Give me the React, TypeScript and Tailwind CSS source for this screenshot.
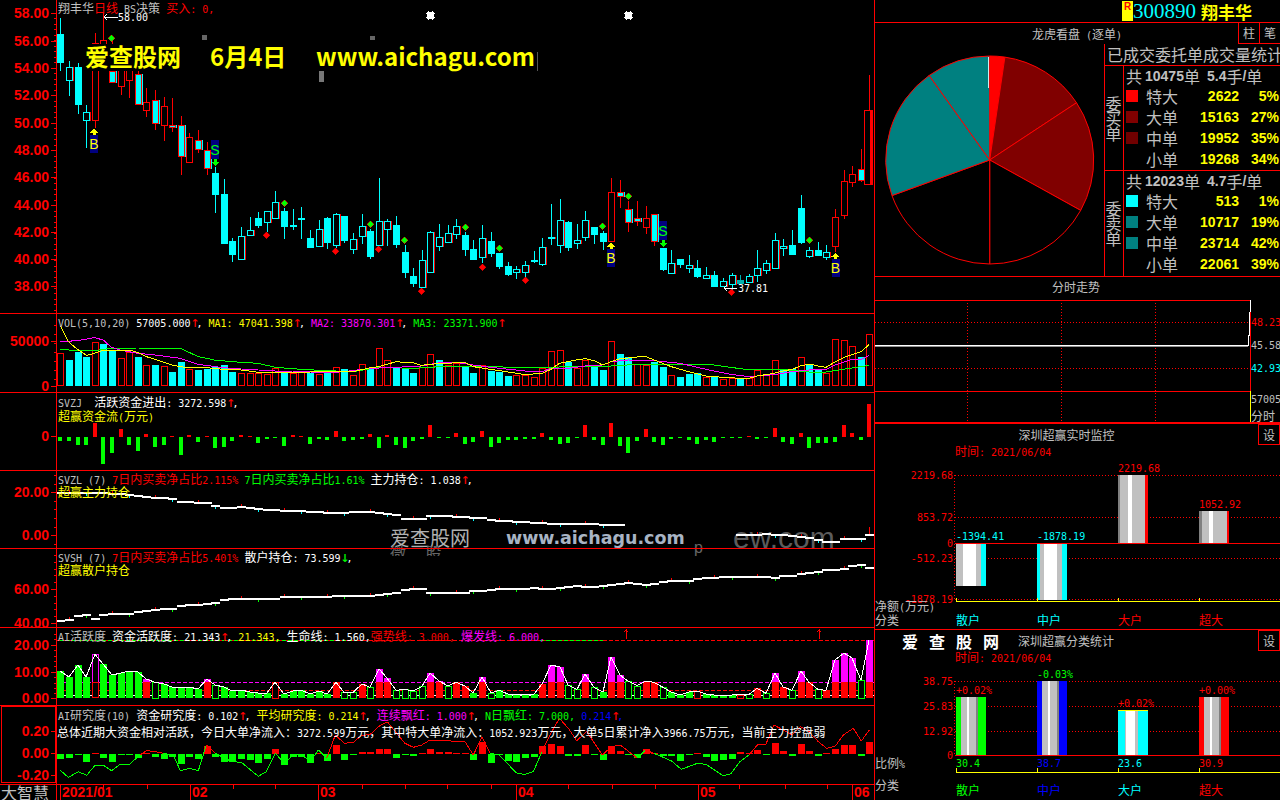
import type { ReactNode } from 'react';

const RED = '#ff0000';
const GREEN = '#00ff00';
const CYAN = '#00ffff';
const MAGENTA = '#ff00ff';
const YELLOW = '#ffff00';
const GREY = '#c0c0c0';
const WHITE = '#ffffff';
const BLUE = '#0000ff';

const xAt = (i: number) => Math.round(60.3 + 8.607 * i);
const MONO = 'DejaVu Sans Mono';
const CJK = 'Noto Sans CJK SC';

// numbers below are read off the 3x crops, so most of them get divided by 3
const candles: [number, number, number, number, string][] = [
  [102, 188, 54, 212, 'c'], [202, 242, 183, 288, 'h'], [202, 315, 190, 342, 'c'], [337, 362, 316, 445, 'h'],
  [130, 362, 100, 385, 'r'], [120, 210, 40, 213, 'r'], [213, 250, 115, 250, 'm'], [200, 262, 200, 285, 'r'],
  [200, 242, 200, 294, 'r'], [223, 314, 213, 314, 'm'], [307, 332, 265, 350, 'r'], [301, 373, 270, 390, 'm'],
  [319, 377, 292, 423, 'r'], [376, 383, 294, 395, 'm'], [376, 472, 349, 525, 'm'], [412, 490, 400, 490, 'r'],
  [421, 451, 390, 458, 'm'], [451, 508, 427, 524, 'm'], [520, 585, 500, 639, 'c'], [583, 731, 537, 731, 'c'],
  [724, 764, 714, 785, 'c'], [709, 781, 682, 781, 'h'], [691, 709, 652, 709, 'h'], [655, 677, 636, 683, 'c'],
  [634, 670, 634, 696, 'h'], [607, 656, 574, 656, 'h'], [633, 680, 625, 716, 'c'], [676, 680, 628, 690, 'c'],
  [655, 659, 622, 716, 'c'], [714, 743, 690, 743, 'c'], [688, 740, 660, 740, 'h'], [655, 728, 652, 747, 'c'],
  [643, 737, 640, 745, 'h'], [649, 722, 649, 730, 'c'], [718, 751, 700, 762, 'h'], [677, 712, 643, 733, 'h'],
  [694, 770, 688, 777, 'c'], [664, 737, 535, 737, 'h'], [664, 689, 658, 737, 'h'], [676, 734, 649, 743, 'c'],
  [757, 818, 735, 833, 'c'], [829, 851, 805, 860, 'c'], [781, 863, 750, 863, 'h'], [697, 818, 692, 818, 'h'],
  [712, 740, 672, 752, 'h'], [700, 728, 675, 728, 'h'], [679, 706, 657, 716, 'h'], [705, 750, 697, 768, 'c'],
  [748, 780, 720, 780, 'c'], [715, 773, 675, 790, 'h'], [723, 762, 697, 770, 'c'], [760, 801, 760, 806, 'c'],
  [798, 825, 786, 827, 'c'], [808, 818, 798, 837, 'h'], [796, 818, 784, 832, 'h'], [781, 785, 753, 790, 'c'],
  [742, 795, 714, 798, 'h'], [712, 718, 612, 735, 'h'], [661, 737, 598, 758, 'h'], [666, 743, 663, 753, 'c'],
  [721, 731, 672, 747, 'h'], [661, 713, 633, 722, 'h'], [681, 705, 681, 732, 'c'], [699, 725, 693, 750, 'c'],
  [577, 725, 534, 725, 'r'], [577, 592, 540, 624, 'm'], [628, 670, 603, 695, 'm'], [655, 667, 603, 678, 'm'],
  [655, 683, 618, 702, 'r'], [643, 727, 643, 738, 'm'], [744, 809, 744, 813, 'c'], [790, 821, 750, 821, 'h'],
  [777, 795, 777, 804, 'c'], [796, 806, 766, 819, 'h'], [804, 831, 780, 834, 'c'], [826, 836, 801, 836, 'h'],
  [825, 861, 813, 861, 'c'], [844, 862, 835, 862, 'h'], [826, 854, 819, 870, 'h'], [840, 851, 825, 851, 't'],
  [829, 850, 822, 850, 'h'], [805, 827, 750, 846, 'h'], [790, 812, 780, 822, 'h'], [721, 806, 700, 806, 'h'],
  [739, 746, 717, 768, 'h'], [735, 765, 690, 765, 'c'], [625, 729, 586, 732, 'c'], [751, 771, 740, 775, 'h'],
  [750, 768, 726, 768, 'c'], [757, 774, 736, 780, 'h'], [652, 740, 628, 755, 'r'], [544, 647, 511, 657, 'r'],
  [523, 548, 498, 561, 'r'], [508, 542, 447, 545, 'm'], [331, 556, 225, 331, 'R'],
];

const vols: [number, number][] = [
  [130, 0], [150, 1], [126, 1], [141, 1], [97, 0], [102, 1], [122, 1], [145, 0], [127, 0], [141, 1], [166, 0], [165, 1],
  [169, 0], [186, 1], [156, 1], [178, 0], [180, 1], [176, 1], [170, 1], [165, 1], [186, 1], [190, 0], [190, 0], [190, 0],
  [193, 0], [175, 0], [183, 1], [190, 0], [183, 0], [188, 1], [193, 0], [190, 1], [172, 0], [178, 1], [196, 0], [163, 0],
  [178, 1], [115, 0], [151, 0], [172, 1], [178, 1], [189, 1], [170, 0], [133, 0], [150, 1], [165, 0], [158, 0], [167, 1],
  [189, 1], [166, 0], [183, 1], [185, 1], [198, 1], [196, 0], [196, 0], [200, 0], [175, 0], [124, 0], [121, 0], [157, 1],
  [175, 0], [150, 0], [168, 1], [180, 1], [94, 0], [132, 1], [141, 1], [163, 0], [165, 0], [155, 1], [171, 1], [196, 0],
  [201, 1], [192, 1], [190, 1], [201, 0], [200, 1], [208, 0], [203, 0], [205, 1], [205, 0], [181, 0], [196, 0], [151, 0],
  [178, 1], [178, 1], [142, 0], [165, 1], [180, 1], [190, 0], [88, 0], [91, 0], [109, 0], [140, 1], [73, 0],
];

const ma1 = [181, 48, 205, 95, 232, 118, 259, 136, 283, 130, 310, 120, 334, 120, 388, 120, 412, 127, 439, 140, 466, 148, 517, 165, 541, 170, 568, 173, 619, 173, 670, 178, 724, 180, 775, 187, 826, 187, 877, 187, 931, 186, 982, 185, 1033, 186, 1060, 185, 1111, 173, 1135, 170, 1189, 155, 1213, 157, 1240, 158, 1264, 166, 1320, 160, 1395, 158, 1420, 170, 1471, 178, 1525, 186, 1575, 194, 1626, 190, 1653, 178, 1678, 160, 1728, 150, 1755, 146, 1783, 152, 1807, 165, 1834, 155, 1858, 147, 1912, 141, 1936, 139, 1962, 150, 2014, 170, 2065, 185, 2118, 198, 2169, 202, 2221, 205, 2247, 205, 2272, 198, 2322, 190, 2349, 183, 2377, 178, 2401, 168, 2427, 162, 2455, 168, 2478, 172, 2506, 155, 2530, 143, 2584, 125, 2608, 103];
const ma2 = [181, 95, 232, 92, 283, 83, 310, 90, 334, 112, 361, 120, 412, 130, 466, 135, 541, 145, 595, 163, 670, 173, 724, 177, 775, 180, 826, 183, 877, 183, 931, 186, 982, 188, 1033, 185, 1111, 175, 1189, 172, 1264, 168, 1320, 158, 1368, 157, 1420, 165, 1471, 172, 1575, 183, 1626, 185, 1653, 175, 1705, 175, 1755, 168, 1807, 165, 1834, 155, 1885, 150, 1962, 152, 2041, 160, 2118, 178, 2193, 193, 2247, 200, 2322, 194, 2377, 185, 2427, 180, 2478, 178, 2506, 165, 2557, 148, 2584, 148, 2608, 136];
const ma3 = [181, 118, 232, 122, 283, 122, 334, 115, 412, 114, 541, 115, 595, 140, 643, 150, 695, 155, 775, 160, 826, 172, 904, 178, 982, 182, 1060, 185, 1135, 172, 1240, 175, 1320, 170, 1420, 168, 1540, 172, 1653, 172, 1755, 168, 1834, 168, 1912, 163, 2128, 163, 2235, 178, 2349, 178, 2427, 186, 2478, 186, 2530, 178, 2580, 170, 2608, 166];

const zj = [-12, -12, -24, -24, 43, -80, -48, 23, -24, -42, 9, -30, -24, 3, -54, 6, -15, 1, -33, -30, -12, 6, 3, -18, -6, -2, -27, 6, 3, -21, -6, -9, 18, -12, -9, -6, 8, -33, 6, -24, -33, -12, -6, 36, -3, -3, 12, -21, -15, 18, -30, -18, -9, -9, -6, -5, 11, -10, -20, -18, -2, 35, -10, -24, 41, -26, -48, -12, 23, -15, -24, -6, -2, -8, -21, -9, -14, -2, -2, -2, 3, -5, -4, 26, -15, -21, 11, -33, -18, -18, -15, 35, 11, -9, 98];

const zl1 = [170, 545, 360, 548, 410, 555, 520, 565, 545, 573, 620, 577, 650, 585, 670, 591, 730, 588, 780, 595, 850, 600, 900, 598, 930, 604, 1030, 605, 1100, 603, 1190, 611, 1215, 624, 1270, 624, 1290, 614, 1320, 615, 1370, 618, 1450, 622, 1480, 628, 1580, 634, 1670, 640, 1750, 638, 1865, 643];
const zl2 = [2200, 672, 2320, 670, 2420, 680, 2480, 692, 2510, 692, 2535, 684, 2585, 684, 2608, 670];
const sh = [180, 224, 205, 224, 230, 212, 260, 208, 285, 218, 310, 208, 340, 203, 385, 203, 410, 197, 465, 193, 525, 187, 545, 180, 595, 176, 645, 172, 675, 160, 700, 158, 825, 158, 860, 153, 950, 152, 1110, 150, 1165, 143, 1190, 142, 1220, 130, 1260, 127, 1290, 142, 1395, 142, 1420, 135, 1470, 134, 1500, 128, 1570, 128, 1590, 126, 1630, 130, 1680, 125, 1730, 120, 1760, 125, 1810, 120, 1860, 113, 1885, 111, 1935, 117, 1960, 115, 1990, 107, 2070, 105, 2095, 98, 2170, 94, 2300, 93, 2325, 97, 2350, 90, 2380, 90, 2430, 80, 2480, 73, 2530, 70, 2560, 60, 2585, 58, 2608, 65];

const ai: [number, string][] = [
  [378, 'g'], [396, 'g'], [360, 'g'], [396, 'g'], [328, 'p'], [357, 'g'], [390, 'g'], [384, 'g'], [378, 'g'], [381, 'g'], [402, 'r'], [412, 'h'],
  [417, 'g'], [426, 'g'], [426, 'g'], [426, 'g'], [432, 'g'], [402, 'r'], [420, 'h'], [426, 'g'], [438, 'g'], [435, 'g'], [441, 'g'], [444, 'g'],
  [444, 'g'], [412, 'o'], [447, 'g'], [438, 'g'], [435, 'g'], [447, 'g'], [438, 'g'], [447, 'g'], [412, 'r'], [442, 'h'], [442, 'h'], [417, 'r'],
  [427, 'h'], [372, 'r'], [399, 'r'], [436, 'h'], [433, 'h'], [438, 'h'], [424, 'h'], [384, 'r'], [408, 'r'], [423, 'h'], [412, 'r'], [423, 'r'],
  [444, 'g'], [396, 'r'], [444, 'h'], [436, 'g'], [447, 'g'], [450, 'g'], [447, 'g'], [447, 'g'], [417, 'r'], [360, 'r'], [366, 'r'], [420, 'h'],
  [433, 'h'], [387, 'r'], [427, 'h'], [441, 'g'], [336, 'r'], [390, 'r'], [408, 'h'], [422, 'h'], [408, 'r'], [412, 'r'], [427, 'h'], [441, 'g'],
  [450, 'g'], [441, 'g'], [438, 'o'], [447, 'g'], [450, 'g'], [453, 'g'], [450, 'g'], [449, 'o'], [448, 'h'], [430, 'r'], [445, 'h'], [384, 'r'],
  [426, 'r'], [436, 'h'], [378, 'r'], [412, 'r'], [433, 'h'], [436, 'r'], [345, 'r'], [324, 'r'], [339, 'r'], [406, 'h'], [285, 'r'],
];

const yj = [-15, -12, -3, -24, 3, -12, -24, -2, -3, -12, 3, -9, -15, -9, -30, -9, -15, 25, -9, -24, -24, -15, -18, -27, -15, 16, -33, -9, -9, -27, 3, -21, 26, -18, -3, 6, 6, 15, 15, -12, -3, -6, 3, 15, 6, 6, 3, 3, -18, 36, -27, -3, -20, -24, -12, -9, 24, 30, 24, -6, -6, 27, -3, -18, 24, 9, -3, -12, 15, 3, -6, -6, -21, -3, 3, -9, -21, -18, -15, 6, 3, 12, -3, 33, 9, -6, 30, 9, -6, 3, 15, 27, 27, -6, 36];
const yjLine = [180, 675, 205, 697, 235, 680, 260, 691, 285, 661, 310, 661, 335, 677, 360, 658, 388, 658, 420, 630, 440, 617, 466, 620, 490, 625, 520, 630, 541, 677, 568, 670, 595, 677, 619, 600, 646, 625, 695, 650, 724, 652, 775, 694, 799, 680, 826, 625, 853, 655, 880, 630, 904, 628, 931, 650, 955, 615, 980, 640, 1006, 570, 1033, 595, 1060, 592, 1084, 572, 1111, 568, 1135, 545, 1162, 530, 1190, 565, 1215, 595, 1240, 607, 1265, 600, 1290, 585, 1395, 590, 1420, 630, 1446, 575, 1471, 625, 1498, 630, 1550, 685, 1575, 688, 1600, 680, 1626, 620, 1650, 570, 1678, 520, 1705, 550, 1730, 587, 1760, 560, 1807, 630, 1834, 605, 1861, 600, 1912, 640, 1936, 615, 1962, 625, 2015, 648, 2044, 673, 2092, 655, 2118, 658, 2169, 692, 2193, 686, 2220, 650, 2247, 630, 2272, 600, 2298, 597, 2322, 540, 2349, 555, 2377, 570, 2401, 545, 2427, 560, 2455, 590, 2480, 610, 2506, 603, 2530, 570, 2560, 550, 2584, 588, 2608, 555];

const pts = (a: number[], oy: number) => {
  const out: string[] = [];
  for (let i = 0; i < a.length; i += 2) out.push(`${a[i] / 3},${oy + a[i + 1] / 3}`);
  return out.join(' ');
};

function interp(a: number[], zx: number) {
  if (zx < a[0] || zx > a[a.length - 2]) return null;
  for (let i = 0; i < a.length - 2; i += 2) {
    if (zx >= a[i] && zx <= a[i + 2]) {
      return a[i + 1] + ((a[i + 3] - a[i + 1]) * (zx - a[i])) / (a[i + 2] - a[i] || 1);
    }
  }
  return null;
}

// half-width latin next to full-width chinese, the way the old bitmap font does it
function runs(s: string) {
  return s.match(/↑|↓|[\x00-\x7f]+|[^\x00-\x7f↑↓]+/g) ?? [];
}

function T({ c, color }: { c: string; color: string }) {
  return (
    <span style={{ color }}>
      {runs(c).map((r, i) =>
        r === '↑' || r === '↓' ? (
          <span key={i} className="font-['DejaVu_Sans_Mono',monospace] text-[15px] leading-[10px] tracking-[-3px]">{r}</span>
        ) : /^[\x00-\x7f]/.test(r) ? (
          <span key={i} className="font-['DejaVu_Sans_Mono',monospace] text-[10px]">{r}</span>
        ) : (
          <span key={i} className="text-[12px]">{r}</span>
        ),
      )}
    </span>
  );
}

function Line({ items, className = '' }: { items: [string, string][]; className?: string }) {
  return (
    <div className={`whitespace-pre leading-[13px] h-[13px] ${className}`}>
      {items.map(([c, color], i) => (
        <T key={i} c={c} color={color} />
      ))}
    </div>
  );
}

function ST({ x, y, c, fill = GREY, anchor }: { x: number; y: number; c: string; fill?: string; anchor?: 'end' | 'middle' }) {
  return (
    <text x={x} y={y} fill={fill} textAnchor={anchor} xmlSpace="preserve">
      {runs(c).map((r, i) =>
        /^[\x00-\x7f]/.test(r) ? (
          <tspan key={i} fontFamily={MONO} fontSize={10}>{r}</tspan>
        ) : (
          <tspan key={i} fontFamily={CJK} fontSize={12}>{r}</tspan>
        ),
      )}
    </text>
  );
}

function AxisLabel({ x, y, c, anchor }: { x: number; y: number; c: string; anchor?: 'end' }) {
  return (
    <text x={x} y={y} fill={RED} fontFamily="Liberation Sans" fontWeight="bold" fontSize={14} textAnchor={anchor}>
      {c}
    </text>
  );
}

function Panel({ className, top, h, labels, minor, boxed, children, head }: {
  className: string;
  top: number;
  h: number;
  labels: [string, number][];
  minor?: [number, number, number];
  boxed?: boolean;
  children?: ReactNode;
  head?: ReactNode;
}) {
  const ticks: number[] = [];
  if (minor) for (let y = minor[0]; y < minor[1]; y += minor[2]) ticks.push(Math.round(y));
  return (
    <div className={`relative flex border-b border-[#ff0000] overflow-hidden shrink-0 ${className}`}>
      <div className="w-[57px] shrink-0 border-r border-[#ff0000]">
        <svg width={56} height={h} shapeRendering="crispEdges">
          <g transform={`translate(0 ${-top})`}>
            {ticks.map(y => <rect key={y} x={54} y={y} width={2} height={1} fill={RED} />)}
            {labels.map(([c, y]) => (
              <g key={c}>
                <rect x={51} y={y} width={5} height={1} fill={RED} />
                <AxisLabel x={49} y={y + 5} c={c} anchor="end" />
              </g>
            ))}
            {boxed && <rect x={1.5} y={top + 0.5} width={54} height={h - 2} fill="none" stroke={RED} />}
          </g>
        </svg>
      </div>
      <div className="relative flex-1">
        <svg className="absolute inset-0" width={817} height={h} shapeRendering="crispEdges">
          <g transform={`translate(-57 ${-top})`}>{children}</g>
        </svg>
        <div className="absolute left-px top-0">{head}</div>
      </div>
    </div>
  );
}

function Diamond({ x, y, fill }: { x: number; y: number; fill: string }) {
  return <polygon points={`${x},${y - 3.5} ${x + 3.5},${y} ${x},${y + 3.5} ${x - 3.5},${y}`} fill={fill} stroke={fill === GREEN ? RED : '#b00000'} strokeWidth={0.5} />;
}

function Marker({ x, y, letter }: { x: number; y: number; letter: 'B' | 'S' }) {
  const buy = letter === 'B';
  const col = buy ? YELLOW : GREEN;
  return (
    <g>
      <rect x={x - 4} y={y} width={8} height={buy ? 18 : 19} fill="#000080" />
      <text x={x} y={y + (buy ? 14 : 15)} fill={col} fontFamily="Liberation Sans" fontSize={14} textAnchor="middle">{letter}</text>
      {buy ? (
        <polygon points={`${x},${y - 6} ${x + 4},${y - 2.5} ${x + 1.5},${y - 2.5} ${x + 1.5},${y} ${x - 1.5},${y} ${x - 1.5},${y - 2.5} ${x - 4},${y - 2.5}`} fill={col} />
      ) : (
        <polygon points={`${x},${y + 26} ${x + 4},${y + 22} ${x + 1.5},${y + 22} ${x + 1.5},${y + 19} ${x - 1.5},${y + 19} ${x - 1.5},${y + 22} ${x - 4},${y + 22}`} fill={col} />
      )}
    </g>
  );
}

function Star({ x, y }: { x: number; y: number }) {
  return (
    <g fill={WHITE}>
      <rect x={x - 3} y={y - 3} width={7} height={7} />
      <rect x={x - 4} y={y - 2} width={1} height={1} />
      <rect x={x - 4} y={y + 2} width={1} height={1} />
      <rect x={x + 4} y={y - 2} width={1} height={1} />
      <rect x={x + 4} y={y + 2} width={1} height={1} />
      <rect x={x - 2} y={y - 4} width={1} height={1} />
      <rect x={x + 2} y={y - 4} width={1} height={1} />
      <rect x={x - 2} y={y + 4} width={1} height={1} />
      <rect x={x + 2} y={y + 4} width={1} height={1} />
    </g>
  );
}

function Candle({ i, d }: { i: number; d: [number, number, number, number, string] }) {
  const x = xAt(i);
  const [t, b, wt, wb, k] = d.map((v, n) => (n < 4 ? Math.round((v as number) / 3) : v)) as [number, number, number, number, string];
  const wickCol = k === 'c' || k === 'h' ? CYAN : k === 't' ? '#00b0b0' : RED;
  return (
    <g>
      <rect x={x} y={wt} width={1} height={Math.max(wb - wt, 1)} fill={wickCol} />
      {(k === 'c' || k === 't') && <rect x={x - 3} y={t} width={7} height={b - t} fill={k === 't' ? '#00b0b0' : CYAN} />}
      {k === 'h' && (
        <g>
          <rect x={x - 2.5} y={t + 0.5} width={6} height={b - t - 1} fill="#000" stroke={CYAN} />
          <rect x={x + 4} y={t} width={1} height={b - t} fill={RED} />
        </g>
      )}
      {k === 'r' && <rect x={x - 2.5} y={t + 0.5} width={6} height={b - t - 1} fill="#000" stroke={RED} strokeWidth={1} />}
      {k === 'm' && (
        <g>
          <rect x={x - 2.5} y={t + 0.5} width={6} height={b - t - 1} fill={CYAN} stroke={RED} />
          <rect x={x + 4} y={t} width={1} height={b - t} fill={CYAN} />
        </g>
      )}
      {k === 'R' && (
        <g>
          <rect x={x - 4.5} y={t + 0.5} width={8} height={b - t - 1} fill="#000" stroke={RED} />
          <rect x={x + 1} y={t} width={3} height={b - t} fill={RED} />
        </g>
      )}
    </g>
  );
}

function StepLine({ a, oy }: { a: number[]; oy: number }) {
  return (
    <g>
      {candles.map((_, i) => {
        const x = xAt(i);
        const z = interp(a, x * 3);
        if (z === null) return null;
        const y = Math.round(oy + z / 3);
        const up = i % 5 === 1;
        const down = i % 5 === 3;
        return (
          <g key={i}>
            <rect x={x - 4} y={y} width={9} height={2} fill={WHITE} />
            {up && <rect x={x} y={y - 2} width={1} height={2} fill={RED} />}
            {down && <rect x={x} y={y + 2} width={1} height={2} fill={a === sh ? GREEN : CYAN} />}
          </g>
        );
      })}
    </g>
  );
}

function ColorLine() {
  const segs: ReactNode[] = [];
  for (let i = 0; i < yjLine.length - 2; i += 2) {
    const mid = (yjLine[i + 1] + yjLine[i + 3]) / 2;
    segs.push(
      <line key={i} x1={yjLine[i] / 3} y1={545 + yjLine[i + 1] / 3} x2={yjLine[i + 2] / 3} y2={545 + yjLine[i + 3] / 3} stroke={mid > 625 ? GREEN : RED} />,
    );
  }
  return <g>{segs}</g>;
}

type Stripe = [number, number, string];
function Bar({ y0, y1, s }: { y0: number; y1: number; s: Stripe[] }) {
  return (
    <g>
      {s.map(([a, b, c], i) => (
        <rect key={i} x={Math.round(875 + a / 3)} y={y0} width={Math.round(875 + b / 3) - Math.round(875 + a / 3)} height={y1 - y0} fill={c} />
      ))}
    </g>
  );
}

const SILVER = '#c0c0c0';
const GR = '#808080';

function arc(a0: number, a1: number) {
  const cx = 989.7, cy = 160, r = 104;
  const p = (a: number) => [cx + r * Math.sin((a * Math.PI) / 180), cy - r * Math.cos((a * Math.PI) / 180)];
  const [x0, y0] = p(a0);
  const [x1, y1] = p(a1);
  return `M${cx} ${cy}L${x0} ${y0}A${r} ${r} 0 ${a1 - a0 > 180 ? 1 : 0} 1 ${x1} ${y1}Z`;
}

const slices: [number, number, string][] = [
  [0, 8.4, RED], [8.4, 56.6, '#800000'], [56.6, 119, '#800000'], [119, 180, '#000000'],
  [180, 250, '#000000'], [250, 324.4, '#008080'], [324.4, 360, '#008080'],
];

function OrderRows({ total, rows }: { total: [string, string]; rows: [string, string, string, string][] }) {
  return (
    <div className="flex-1 pl-[2px]">
      <div className="flex items-center h-[19px] text-[16px] leading-none text-[#c0c0c0] whitespace-pre">
        <span>共</span>
        <b className="ml-[3px] font-['Liberation_Sans',sans-serif] text-[14px]">{total[0]}</b>
        <span>单</span>
        <b className="ml-[7px] font-['Liberation_Sans',sans-serif] text-[14px]">{total[1]}</b>
        <span>手</span>
        <b className="font-['Liberation_Sans',sans-serif] text-[14px]">/</b>
        <span>单</span>
      </div>
      {rows.map(([label, val, pct, col]) => (
        <div key={label} className="flex items-center h-[21px]">
          <span className="w-[12px] h-[12px] shrink-0" style={{ background: col }} />
          <span className="ml-[8px] text-[16px] leading-none text-[#c0c0c0]">{label}</span>
          <b className="ml-auto text-[14px] leading-none text-[#ffff00] font-['Liberation_Sans',sans-serif]">{val}</b>
          <b className="w-[40px] mr-px text-right text-[14px] leading-none text-[#ffff00] font-['Liberation_Sans',sans-serif]">{pct}</b>
        </div>
      ))}
    </div>
  );
}

function Setting() {
  return (
    <div className="w-[22px] h-[21px] shrink-0 border border-[#ff0000] flex items-center justify-center text-[12px] leading-none text-[#c0c0c0]">设</div>
  );
}

const mainLabels: [string, number][] = [
  ['58.00', 13], ['56.00', 41], ['54.00', 68], ['52.00', 95], ['50.00', 123], ['48.00', 150],
  ['46.00', 177], ['44.00', 205], ['42.00', 232], ['40.00', 259], ['38.00', 286],
];
const diamonds: [number, string][] = [
  [334, GREEN], [853, GREEN], [1111, GREEN], [1213, GREEN], [1396, GREEN], [1498, GREEN], [1807, GREEN], [1885, GREEN], [2428, GREEN],
];
const diamondY = [115, 610, 673, 721, 682, 745, 679, 589, 721];
const redDiamonds = [[799, 706], [1006, 754], [1135, 748], [1264, 874], [1447, 802], [1576, 841], [2195, 877]];

const monthBars = [60, 190, 318, 516, 698, 852];

export default function App() {
  return (
    <div className="w-[1280px] h-[800px] bg-black flex overflow-hidden font-['Noto_Sans_CJK_SC',sans-serif]">
      <div className="relative w-[875px] h-[800px] shrink-0 border-r border-[#ff0000] flex flex-col">
        {/* ghost watermark, painted under the panels */}
        <div className="absolute left-[390px] top-[526px] w-[460px] h-[30px] overflow-hidden whitespace-pre">
          <span className="absolute left-0 top-0 text-[20px] leading-[24px] text-[#b0b0b0]">爱查股网</span>
          <span className="absolute left-[116px] top-0 text-[17.5px] leading-[24px] font-bold font-['DejaVu_Sans',sans-serif] text-[#a8b4c4]">www.aichagu.com</span>
          <span className="absolute left-[304px] top-[12px] text-[16px] leading-[20px] font-['Liberation_Sans',sans-serif] text-[#666666]">p</span>
          <span className="absolute left-[343px] top-[-6px] text-[30px] leading-[36px] font-['Liberation_Sans',sans-serif] text-[#5c5c5c]">ew.com</span>
          <span className="absolute left-0 top-[16px] text-[16px] leading-[20px] text-[#666666]">微 二股</span>
        </div>

        <Panel
          className="h-[314px]"
          top={0}
          h={313}
          labels={mainLabels}
          minor={[18, 312, 5.5]}
          head={
            <Line items={[['翔丰华', GREY], ['日线', RED], [' BS决策 ', GREY], ['买入: 0,', RED]]} />
          }
        >
          {candles.map((d, i) => <Candle key={i} i={i} d={d} />)}
          {diamonds.map(([zx, c], i) => <Diamond key={zx} x={zx / 3} y={diamondY[i] / 3} fill={c} />)}
          {redDiamonds.map(([zx, zy]) => <Diamond key={zx} x={zx / 3} y={zy / 3} fill={RED} />)}
          <Marker x={94} y={135} letter="B" />
          <Marker x={215} y={140} letter="S" />
          <Marker x={611} y={249} letter="B" />
          <Marker x={663} y={221} letter="S" />
          <Marker x={835.5} y={259} letter="B" />
          <Star x={430} y={15} />
          <Star x={628} y={15} />
          <rect x={202} y={35} width={5} height={5} fill="#666666" />
          <rect x={370} y={36} width={5} height={4} fill="#666666" />
          <polyline points="118,17 104,17" stroke={WHITE} fill="none" />
          <polyline points="107,14 104,17 107,20" stroke={WHITE} fill="none" />
          <ST x={118} y={21} c="58.00" fill={WHITE} />
          <polyline points="737,288 724,288" stroke={WHITE} fill="none" />
          <polyline points="727,285 724,288 727,291" stroke={WHITE} fill="none" />
          <ST x={738} y={292} c="37.81" fill={WHITE} />
          {/* the yellow banner sits on a black plate over the candles */}
          <rect x={83} y={44} width={454} height={27} fill="#000" />
          <rect x={537} y={52} width={1} height={19} fill="#555555" />
          <rect x={319} y={71} width={5} height={11} fill="#777777" />
          <text x={85} y={66} fill={YELLOW} fontFamily={CJK} fontWeight="bold" fontSize={24}>爱查股网</text>
          <text x={210} y={66} fill={YELLOW} fontFamily={CJK} fontWeight="bold" fontSize={24}>6月4日</text>
          <text x={316} y={66} fill={YELLOW} fontFamily={CJK} fontWeight="bold" fontSize={24}>www.aichagu.com</text>
        </Panel>

        <Panel
          className="h-[79px]"
          top={314}
          h={78}
          labels={[['50000', 341], ['0', 386]]}
          minor={[325, 386, 9]}
          head={
            <Line
              items={[
                ['VOL(5,10,20) ', GREY], ['57005.000', WHITE], ['↑', RED], [', ', WHITE],
                ['MA1: 47041.398', YELLOW], ['↑', RED], [', ', WHITE],
                ['MA2: 33870.301', MAGENTA], ['↑', RED], [', ', WHITE],
                ['MA3: 23371.900', GREEN], ['↑', RED],
              ]}
            />
          }
        >
          {vols.map(([t, f], i) => {
            const x = xAt(i);
            const y = 310 + Math.round(t / 3);
            return f ? (
              <rect key={i} x={x - 3} y={y} width={7} height={386 - y} fill={CYAN} />
            ) : (
              <rect key={i} x={x - 2.5} y={y + 0.5} width={6} height={385 - y} fill="#000" stroke={RED} />
            );
          })}
          <polyline points={pts(ma3, 310)} fill="none" stroke={GREEN} />
          <polyline points={pts(ma2, 310)} fill="none" stroke={MAGENTA} />
          <polyline points={pts(ma1, 310)} fill="none" stroke={YELLOW} />
        </Panel>

        <Panel
          className="h-[78px]"
          top={393}
          h={77}
          labels={[['0', 436]]}
          head={
            <div>
              <Line className="mt-px" items={[['SVZJ  ', GREY], ['活跃资金进出: 3272.598', WHITE], ['↑', RED], [',', WHITE]]} />
              <Line className="mt-px" items={[['超赢资金流(万元)', YELLOW]]} />
            </div>
          }
        >
          {zj.map((v, i) => {
            const h = Math.max(Math.round(Math.abs(v) / 3), 1);
            return <rect key={i} x={xAt(i) - 2} y={v > 0 ? 437 - h : 437} width={4} height={h} fill={v > 0 ? RED : GREEN} />;
          })}
        </Panel>

        <Panel
          className="h-[78px]"
          top={471}
          h={77}
          labels={[['20.00', 492], ['0.00', 535]]}
          minor={[475, 548, 8.6]}
          head={
            <div>
              <Line items={[['SVZL (7) ', GREY], ['7日内买卖净占比2.115% ', RED], ['7日内买卖净占比1.61% ', GREEN], ['主力持仓: 1.038', WHITE], ['↑', RED], [',', WHITE]]} />
              <Line items={[['超赢主力持仓', YELLOW]]} />
            </div>
          }
        >
          <StepLine a={zl1} oy={310} />
          <StepLine a={zl2} oy={310} />
          <rect x={869} y={527} width={1} height={7} fill={RED} />
        </Panel>

        <Panel
          className="h-[79px]"
          top={549}
          h={78}
          labels={[['60.00', 589], ['40.00', 623]]}
          minor={[555, 627, 6.8]}
          head={
            <div>
              <Line items={[['SVSH (7) ', GREY], ['7日内买卖净占比5.401% ', RED], ['散户持仓: 73.599', WHITE], ['↓', GREEN], [',', WHITE]]} />
              <Line items={[['超赢散户持仓', YELLOW]]} />
            </div>
          }
        >
          <StepLine a={sh} oy={545} />
        </Panel>

        <Panel
          className="h-[78px]"
          top={628}
          h={77}
          labels={[['20.00', 645], ['10.00', 672], ['0.00', 698]]}
          minor={[634, 698, 5.4]}
          head={
            <Line
              items={[
                ['AI活跃度 ', GREY], ['资金活跃度: 21.343', WHITE], ['↑', RED], [', ', WHITE], ['21.343, ', YELLOW],
                ['生命线: 1.560,', WHITE], ['强势线: 3.000, ', RED], ['爆发线: 6.000,', MAGENTA],
              ]}
            />
          }
        >
          <line x1={57} y1={640.5} x2={875} y2={640.5} stroke={RED} strokeDasharray="4 2" />
          <line x1={60} y1={640.5} x2={357} y2={640.5} stroke={GREEN} strokeDasharray="4 2" />
          <line x1={540} y1={640.5} x2={603} y2={640.5} stroke={GREEN} strokeDasharray="4 2" />
          <line x1={57} y1={682.5} x2={875} y2={682.5} stroke={MAGENTA} strokeDasharray="4 2" />
          <line x1={57} y1={690.5} x2={875} y2={690.5} stroke={RED} strokeDasharray="4 2" />
          <line x1={57} y1={695.5} x2={875} y2={695.5} stroke={WHITE} />
          {ai.map(([t, k], i) => {
            const x = xAt(i);
            const y = 545 + Math.round(t / 3);
            if (k === 'g') return <rect key={i} x={x - 3} y={y} width={7} height={698 - y} fill={GREEN} />;
            if (k === 'h') return <rect key={i} x={x - 2.5} y={y + 0.5} width={6} height={698 - y} fill="#000" stroke={GREEN} />;
            if (k === 'o') return <rect key={i} x={x - 2.5} y={y + 0.5} width={6} height={698 - y} fill="#000" stroke={RED} />;
            if (k === 'p') {
              return (
                <g key={i}>
                  <rect x={x - 2.5} y={y + 0.5} width={6} height={682 - y} fill="#000" stroke={MAGENTA} />
                  <rect x={x - 2.5} y={682.5} width={6} height={15} fill="#000" stroke={RED} />
                </g>
              );
            }
            return (
              <g key={i}>
                {y < 682 && <rect x={x - 3} y={y} width={7} height={682 - y} fill={MAGENTA} />}
                <rect x={x - 3} y={Math.max(y, 682)} width={7} height={698 - Math.max(y, 682)} fill={RED} />
              </g>
            );
          })}
          <polyline points={ai.map(([t], i) => `${xAt(i)},${545 + t / 3}`).join(' ')} fill="none" stroke={WHITE} />
          {[625.7, 819].map(x => (
            <g key={x}>
              <rect x={Math.round(x)} y={629} width={1} height={10} fill={RED} />
              <polyline points={`${Math.round(x) - 2},${632} ${Math.round(x)},${630} ${Math.round(x) + 2},${632}`} fill="none" stroke={RED} />
            </g>
          ))}
        </Panel>

        <Panel
          className="h-[79px]"
          top={706}
          h={78}
          labels={[['0.20', 731], ['0.00', 753], ['-0.20', 775]]}
          boxed
          head={
            <div>
              <Line
                className="mt-px"
                items={[
                  ['AI研究度(10) ', GREY], ['资金研究度: 0.102', WHITE], ['↑', RED], [', ', WHITE],
                  ['平均研究度: 0.214', YELLOW], ['↑', RED], [', ', WHITE],
                  ['连续飘红: 1.000', MAGENTA], ['↑', RED], [', ', WHITE],
                  ['N日飘红: 7.000, ', GREEN], ['0.214', BLUE], ['↑', RED], [',', BLUE],
                ]}
              />
              <Line
                className="mt-[4px] -ml-px"
                items={[['总体近期大资金相对活跃，今日大单净流入：3272.599万元，其中特大单净流入：1052.923万元，大单5日累计净入3966.75万元，当前主力控盘弱', WHITE]]}
              />
            </div>
          }
        >
          {yj.map((v, i) => {
            const h = Math.max(Math.round(Math.abs(v) / 3), 1);
            return <rect key={i} x={xAt(i) - 3} y={v > 0 ? 754 - h : 754} width={7} height={h} fill={v > 0 ? RED : GREEN} />;
          })}
          <ColorLine />
        </Panel>

        <div className="relative flex-1 flex">
          <span className="w-[57px] text-[16px] leading-[15px] text-[#c0c0c0] pl-px whitespace-nowrap">大智慧</span>
          <svg className="absolute inset-0" width={874} height={15} shapeRendering="crispEdges">
            {[60, 103, 147, 233, 275, 362, 405, 447, 491, 568, 612, 655, 739, 785, 827].map(x => (
              <rect key={x} x={x} y={0} width={1} height={4} fill={RED} />
            ))}
            {monthBars.map(x => <rect key={x} x={x} y={0} width={1} height={15} fill={RED} />)}
            <rect x={56} y={0} width={1} height={15} fill={RED} />
            <AxisLabel x={62} y={12} c="2021/01" />
            {([['02', 192], ['03', 320], ['04', 518], ['05', 700], ['06', 854]] as [string, number][]).map(([c, x]) => (
              <AxisLabel key={c} x={x} y={12} c={c} />
            ))}
          </svg>
        </div>
      </div>

      <div className="w-[405px] h-[800px] shrink-0 flex flex-col">
        <div className="h-[23px] shrink-0 border-b border-[#ff0000] flex items-center pl-[247px] whitespace-nowrap">
          <span className="w-[11px] h-[20px] bg-[#ffff00] text-[#ff0000] text-[10px] leading-[12px] font-bold text-center font-['Liberation_Sans',sans-serif]">R</span>
          <span className="text-[21px] leading-none text-[#00ffff] font-['Liberation_Serif',serif]">300890</span>
          <span className="ml-[5px] text-[17px] leading-none font-bold text-[#ffff00]">翔丰华</span>
        </div>

        <div className="h-[254px] shrink-0 border-b border-[#ff0000] flex flex-col">
          <div className="h-[21px] shrink-0 flex">
            <div className="flex-1 text-center text-[12px] leading-[21px] text-[#c0c0c0] pl-[41px] whitespace-pre">
              <T c="龙虎看盘 (逐单)" color={GREY} />
            </div>
            <div className="w-[21px] border-l border-b border-[#ff0000] text-center text-[12px] leading-[20px] text-[#c0c0c0]">柱</div>
            <div className="w-[21px] border-l border-b border-[#ff0000] text-center text-[12px] leading-[20px] text-[#c0c0c0]">笔</div>
          </div>
          <div className="flex-1 flex min-h-0">
            <div className="w-[230px] shrink-0 border-r border-[#ff0000]">
              <svg width={229} height={232}>
                <g transform="translate(-875 -44)">
                  {slices.map(([a, b, c]) => <path key={a} d={arc(a, b)} fill={c} stroke={RED} strokeWidth={1} />)}
                  <rect x={988} y={57} width={1} height={31} fill="#c8f0f0" />
                </g>
              </svg>
            </div>
            <div className="flex-1 flex flex-col min-w-0">
              <div className="h-[22px] shrink-0 border-b border-[#ff0000] text-[16px] leading-[21px] text-[#c0c0c0] pl-[2px] whitespace-nowrap overflow-hidden">已成交委托单成交量统计</div>
              <div className="h-[105px] shrink-0 border-b border-[#ff0000] flex">
                <div className="w-[19px] shrink-0 border-r border-[#ff0000] flex flex-col items-center justify-center text-[16px] leading-[15px] text-[#c0c0c0] pr-px">
                  <span>委</span><span>买</span><span>单</span>
                </div>
                <OrderRows
                  total={['10475', '5.4']}
                  rows={[
                    ['特大', '2622', '5%', RED],
                    ['大单', '15163', '27%', '#800000'],
                    ['中单', '19952', '35%', '#700000'],
                    ['小单', '19268', '34%', 'transparent'],
                  ]}
                />
              </div>
              <div className="flex-1 flex">
                <div className="w-[19px] shrink-0 border-r border-[#ff0000] flex flex-col items-center justify-center text-[16px] leading-[15px] text-[#c0c0c0] pr-px">
                  <span>委</span><span>卖</span><span>单</span>
                </div>
                <OrderRows
                  total={['12023', '4.7']}
                  rows={[
                    ['特大', '513', '1%', CYAN],
                    ['大单', '10717', '19%', '#008080'],
                    ['中单', '23714', '42%', '#008080'],
                    ['小单', '22061', '39%', 'transparent'],
                  ]}
                />
              </div>
            </div>
          </div>
        </div>

        <div className="h-[147px] shrink-0 border-b-2 border-[#ff0000] flex flex-col">
          <div className="h-[23px] shrink-0 text-center text-[12px] leading-[20px] text-[#c0c0c0] pr-[3px]">分时走势</div>
          <svg width={405} height={122} shapeRendering="crispEdges">
            <g transform="translate(-875 -300)">
              <rect x={875} y={300} width={375} height={1} fill={RED} />
              <rect x={875} y={391} width={375} height={1} fill={RED} />
              {[322, 368].map(y => <line key={y} x1={875} x2={1250} y1={y + 0.5} y2={y + 0.5} stroke={RED} strokeDasharray="1 2" />)}
              {[967, 1061, 1155].map(x => <line key={x} x1={x + 0.5} x2={x + 0.5} y1={300} y2={423} stroke={RED} strokeDasharray="1 2" />)}
              <rect x={1250} y={300} width={1} height={92} fill={RED} />
              <rect x={1250} y={391} width={1} height={32} fill={YELLOW} />
              <rect x={875} y={345} width={373} height={1} fill={WHITE} />
              <rect x={875} y={346} width={373} height={1} fill="#909090" />
              <rect x={1248} y={335} width={1} height={11} fill={WHITE} />
              <rect x={1249} y={312} width={1} height={24} fill={WHITE} />
              <rect x={1250} y={300} width={1} height={12} fill={WHITE} />
              <ST x={1251} y={326} c="48.23" fill={RED} />
              <ST x={1251} y={349} c="45.58" />
              <ST x={1251} y={372} c="42.93" fill={CYAN} />
              <ST x={1251} y={403} c="57005" />
              <ST x={1251} y={421} c="分时" />
            </g>
          </svg>
        </div>

        <div className="h-[206px] shrink-0 border-b border-[#ff0000] flex flex-col">
          <div className="h-[21px] shrink-0 flex">
            <div className="flex-1 text-center text-[12px] leading-[21px] text-[#c0c0c0]">深圳超赢实时监控</div>
            <Setting />
          </div>
          <svg width={405} height={184} shapeRendering="crispEdges">
            <g transform="translate(-875 -445)">
              <ST x={955} y={456} c="时间: 2021/06/04" fill={RED} />
              {[475, 517, 558].map(y => <line key={y} x1={955} x2={1280} y1={y + 0.5} y2={y + 0.5} stroke={RED} strokeDasharray="1 2" />)}
              <line x1={954.5} x2={954.5} y1={475} y2={601} stroke={RED} strokeDasharray="1 2" />
              <line x1={955} x2={1280} y1={599.5} y2={599.5} stroke={RED} strokeDasharray="1 2" />
              {([['2219.68', 479], ['853.72', 521], ['0', 547], ['-512.23', 562], ['-1878.19', 603]] as [string, number][]).map(([c, y]) => (
                <ST key={c} x={953} y={y} c={c} fill={RED} anchor="end" />
              ))}
              <Bar y0={543} y1={586} s={[[243, 250, SILVER], [250, 264, SILVER], [264, 303, WHITE], [303, 318, SILVER], [318, 333, CYAN]]} />
              <Bar y0={543} y1={600} s={[[486, 496, CYAN], [496, 507, SILVER], [507, 546, WHITE], [546, 561, SILVER], [561, 576, CYAN]]} />
              <Bar y0={475} y1={543} s={[[729, 735, GR], [735, 759, SILVER], [759, 771, WHITE], [771, 811, SILVER], [811, 819, RED]]} />
              <Bar y0={511} y1={543} s={[[972, 981, GR], [981, 1002, SILVER], [1002, 1014, WHITE], [1014, 1056, SILVER], [1056, 1062, RED]]} />
              <rect x={955} y={543} width={325} height={1} fill={RED} />
              <rect x={956} y={601} width={324} height={1} fill={YELLOW} />
              {[956, 1037, 1118, 1199].map(x => <rect key={x} x={x} y={598} width={1} height={3} fill={YELLOW} />)}
              <ST x={956} y={540} c="-1394.41" fill={CYAN} />
              <ST x={1037} y={540} c="-1878.19" fill={CYAN} />
              <ST x={1118} y={472} c="2219.68" fill={RED} />
              <ST x={1199} y={508} c="1052.92" fill={RED} />
              <ST x={875} y={611} c="净额(万元)" />
              <ST x={875} y={625} c="分类" />
              <ST x={956} y={625} c="散户" fill={CYAN} />
              <ST x={1037} y={625} c="中户" fill={CYAN} />
              <ST x={1118} y={625} c="大户" fill={RED} />
              <ST x={1199} y={625} c="超大" fill={RED} />
            </g>
          </svg>
        </div>

        <div className="flex-1 flex flex-col min-h-0">
          <div className="h-[21px] shrink-0 flex items-center pl-[27px] whitespace-nowrap">
            <span className="text-[16px] leading-none font-bold text-white tracking-[11px]">爱查股网</span>
            <span className="ml-[8px] text-[12px] leading-none text-[#c0c0c0]">深圳超赢分类统计</span>
            <div className="ml-auto"><Setting /></div>
          </div>
          <svg width={405} height={149} shapeRendering="crispEdges">
            <g transform="translate(-875 -651)">
              <ST x={955} y={662} c="时间: 2021/06/04" fill={RED} />
              {[681, 706, 731].map(y => <line key={y} x1={955} x2={1280} y1={y + 0.5} y2={y + 0.5} stroke={RED} strokeDasharray="1 2" />)}
              <line x1={954.5} x2={954.5} y1={681} y2={755} stroke={RED} strokeDasharray="1 2" />
              {([['38.75', 685], ['25.83', 710], ['12.92', 735], ['0', 759]] as [string, number][]).map(([c, y]) => (
                <ST key={c} x={953} y={y} c={c} fill={RED} anchor="end" />
              ))}
              <Bar y0={697} y1={755} s={[[243, 258, GREEN], [258, 275, SILVER], [275, 282, WHITE], [282, 303, SILVER], [303, 309, GR], [309, 333, GREEN]]} />
              <Bar y0={681} y1={755} s={[[486, 501, BLUE], [501, 519, SILVER], [519, 526, WHITE], [526, 546, SILVER], [546, 552, GR], [552, 576, BLUE]]} />
              <Bar y0={710} y1={755} s={[[729, 750, CYAN], [750, 753, SILVER], [753, 780, WHITE], [780, 790, SILVER], [790, 819, CYAN]]} />
              <rect x={1118} y={710} width={30} height={1} fill={YELLOW} />
              <Bar y0={697} y1={755} s={[[972, 987, RED], [987, 1005, SILVER], [1005, 1011, WHITE], [1011, 1032, SILVER], [1032, 1038, GR], [1038, 1062, RED]]} />
              <rect x={955} y={755} width={325} height={1} fill={RED} />
              <rect x={956} y={772} width={324} height={1} fill={YELLOW} />
              {[956, 1037, 1118, 1199].map(x => <rect key={x} x={x} y={768} width={1} height={4} fill={YELLOW} />)}
              <ST x={956} y={694} c="+0.02%" fill={RED} />
              <ST x={1037} y={678} c="-0.03%" fill={GREEN} />
              <ST x={1118} y={707} c="+0.02%" fill={RED} />
              <ST x={1199} y={694} c="+0.00%" fill={RED} />
              <ST x={956} y={767} c="30.4" fill={GREEN} />
              <ST x={1037} y={767} c="38.7" fill={BLUE} />
              <ST x={1118} y={767} c="23.6" fill={CYAN} />
              <ST x={1199} y={767} c="30.9" fill={RED} />
              <ST x={875} y={768} c="比例%" />
              <ST x={875} y={790} c="分类" />
              <ST x={956} y={795} c="散户" fill={GREEN} />
              <ST x={1037} y={795} c="中户" fill={BLUE} />
              <ST x={1118} y={795} c="大户" fill={CYAN} />
              <ST x={1199} y={795} c="超大" fill={RED} />
            </g>
          </svg>
        </div>
      </div>
    </div>
  );
}
